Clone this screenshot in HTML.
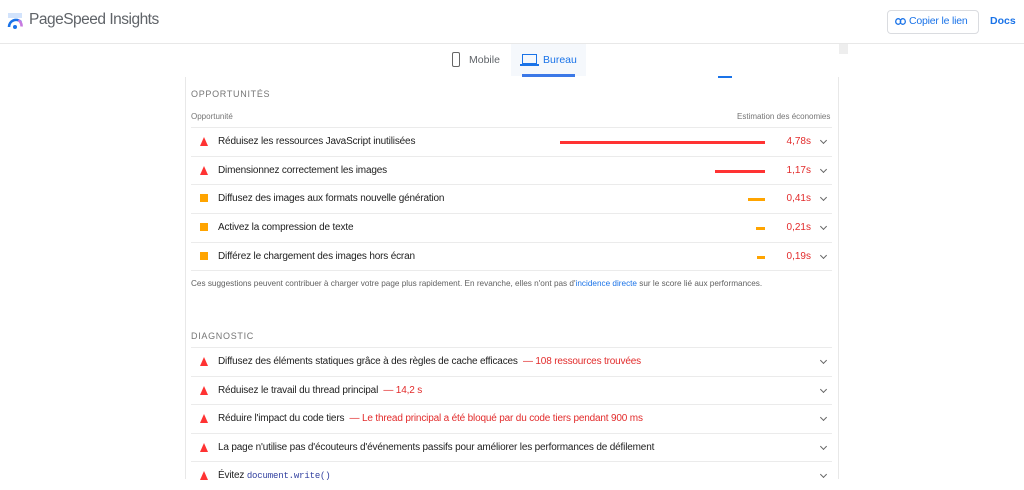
<!DOCTYPE html>
<html><head><meta charset="utf-8"><style>
*{margin:0;padding:0;box-sizing:border-box}
body{width:1024px;height:479px;overflow:hidden;background:#fff;font-family:"Liberation Sans",Arial,sans-serif;position:relative;color:#212121}
.a{position:absolute;white-space:nowrap}
.row{position:absolute;left:191px;width:641px;height:29px;border-top:1px solid #ebebeb}
.row .t{position:absolute;left:27px;top:8px;font-size:10px;letter-spacing:-0.17px;color:#212121}
.row .t .r{color:#e22b2b}
.tri{position:absolute;left:9px;top:9px;width:0;height:0;border-left:4.5px solid transparent;border-right:4.5px solid transparent;border-bottom:9px solid #f33}
.sq{position:absolute;left:9px;top:9px;width:8px;height:8px;background:#ffa400}
.bar{position:absolute;top:13px;height:3px;right:67px}
.v{position:absolute;right:21px;top:8px;font-size:10px;color:#e22b2b}
.ch{position:absolute;right:6px;top:10px;width:5px;height:5px;border-right:1.3px solid #666;border-bottom:1.3px solid #666;transform:rotate(45deg)}
</style></head><body>
<div class="a" style="left:0;top:43px;width:1024px;height:1px;background:#e8e8e8"></div>
<svg class="a" style="left:7px;top:13px" width="16" height="16" viewBox="0 0 16 16">
<rect x="1" y="0" width="14" height="5" fill="#d2e3fc"/>
<path d="M2 14 A7 7 0 0 1 14 9" stroke="#1a73e8" stroke-width="2.6" fill="none"/>
<path d="M11.5 7.2 A7 7 0 0 1 14.5 13.5" stroke="#c77ae0" stroke-width="2.6" fill="none"/>
<circle cx="8" cy="14" r="2" fill="#1a73e8"/>
</svg>
<div class="a" style="left:29px;top:11px;font-size:15.5px;letter-spacing:-0.5px;color:#5f6368">PageSpeed Insights</div>
<div class="a" style="left:887px;top:10px;width:92px;height:24px;border:1px solid #dadce0;border-radius:4px"></div>
<svg class="a" style="left:895px;top:18px" width="11" height="7" viewBox="0 0 11 7"><rect x="0.7" y="0.7" width="5" height="5.6" rx="2.8" fill="none" stroke="#1a73e8" stroke-width="1.3"/><rect x="5.3" y="0.7" width="5" height="5.6" rx="2.8" fill="none" stroke="#1a73e8" stroke-width="1.3"/></svg>
<div class="a" style="left:909px;top:15px;font-size:10.5px;letter-spacing:-0.2px;color:#1a73e8">Copier le lien</div>
<div class="a" style="left:990px;top:15px;font-size:10.5px;color:#1a73e8;font-weight:bold">Docs</div>
<div class="a" style="left:839px;top:44px;width:9px;height:10px;background:#eee"></div>
<div class="a" style="left:511px;top:44px;width:75px;height:32px;background:#f5f8fc"></div>
<div class="a" style="left:522px;top:74px;width:53px;height:3px;background:#3b78e7"></div>
<div class="a" style="left:452px;top:52px;width:8px;height:15px;border:1.5px solid #666;border-radius:2px"></div>
<div class="a" style="left:469px;top:54px;font-size:10.5px;color:#5f6368">Mobile</div>
<div class="a" style="left:522px;top:54px;width:15px;height:10px;border:1.5px solid #1a73e8"></div>
<div class="a" style="left:520px;top:64px;width:19px;height:1.5px;background:#1a73e8"></div>
<div class="a" style="left:543px;top:54px;font-size:10.5px;color:#1a73e8">Bureau</div>
<div class="a" style="left:718px;top:76px;width:14px;height:2px;background:#1a73e8"></div>
<div class="a" style="left:185px;top:77px;width:1px;height:402px;background:#e8e8e8"></div>
<div class="a" style="left:838px;top:77px;width:1px;height:402px;background:#e8e8e8"></div>
<div class="a" style="left:191px;top:89px;font-size:9px;color:#757575;letter-spacing:.7px">OPPORTUNITÉS</div>
<div class="a" style="left:191px;top:112px;font-size:8px;color:#757575">Opportunité</div>
<div class="a" style="left:737px;top:112px;font-size:8px;color:#757575">Estimation des économies</div>
<div class="row" style="top:127px"><div class="tri"></div><div class="t">Réduisez les ressources JavaScript inutilisées</div><div class="bar" style="width:205px;background:#f33"></div><div class="v">4,78s</div><div class="ch"></div></div>
<div class="row" style="top:156px"><div class="tri"></div><div class="t">Dimensionnez correctement les images</div><div class="bar" style="width:50px;background:#f33"></div><div class="v">1,17s</div><div class="ch"></div></div>
<div class="row" style="top:184px"><div class="sq"></div><div class="t">Diffusez des images aux formats nouvelle génération</div><div class="bar" style="width:17px;background:#ffa400"></div><div class="v">0,41s</div><div class="ch"></div></div>
<div class="row" style="top:213px"><div class="sq"></div><div class="t">Activez la compression de texte</div><div class="bar" style="width:9px;background:#ffa400"></div><div class="v">0,21s</div><div class="ch"></div></div>
<div class="row" style="top:242px;border-bottom:1px solid #ebebeb"><div class="sq"></div><div class="t">Différez le chargement des images hors écran</div><div class="bar" style="width:8px;background:#ffa400"></div><div class="v">0,19s</div><div class="ch"></div></div>
<div class="a" style="left:191px;top:279px;font-size:8.2px;color:#616161">Ces suggestions peuvent contribuer à charger votre page plus rapidement. En revanche, elles n'ont pas d'<span style="color:#1a73e8">incidence directe</span> sur le score lié aux performances.</div>
<div class="a" style="left:191px;top:331px;font-size:9px;color:#757575;letter-spacing:.7px">DIAGNOSTIC</div>
<div class="row" style="top:347px"><div class="tri"></div><div class="t">Diffusez des éléments statiques grâce à des règles de cache efficaces <span class="r">&nbsp;— 108 ressources trouvées</span></div><div class="ch"></div></div>
<div class="row" style="top:376px"><div class="tri"></div><div class="t">Réduisez le travail du thread principal <span class="r">&nbsp;— 14,2 s</span></div><div class="ch"></div></div>
<div class="row" style="top:404px"><div class="tri"></div><div class="t">Réduire l'impact du code tiers <span class="r">&nbsp;— Le thread principal a été bloqué par du code tiers pendant 900 ms</span></div><div class="ch"></div></div>
<div class="row" style="top:433px"><div class="tri"></div><div class="t">La page n'utilise pas d'écouteurs d'événements passifs pour améliorer les performances de défilement</div><div class="ch"></div></div>
<div class="row" style="top:461px"><div class="tri"></div><div class="t">Évitez <span style="font-family:'Liberation Mono',monospace;font-size:9px;color:#303f9f">document.write()</span></div><div class="ch"></div></div>
</body></html>
